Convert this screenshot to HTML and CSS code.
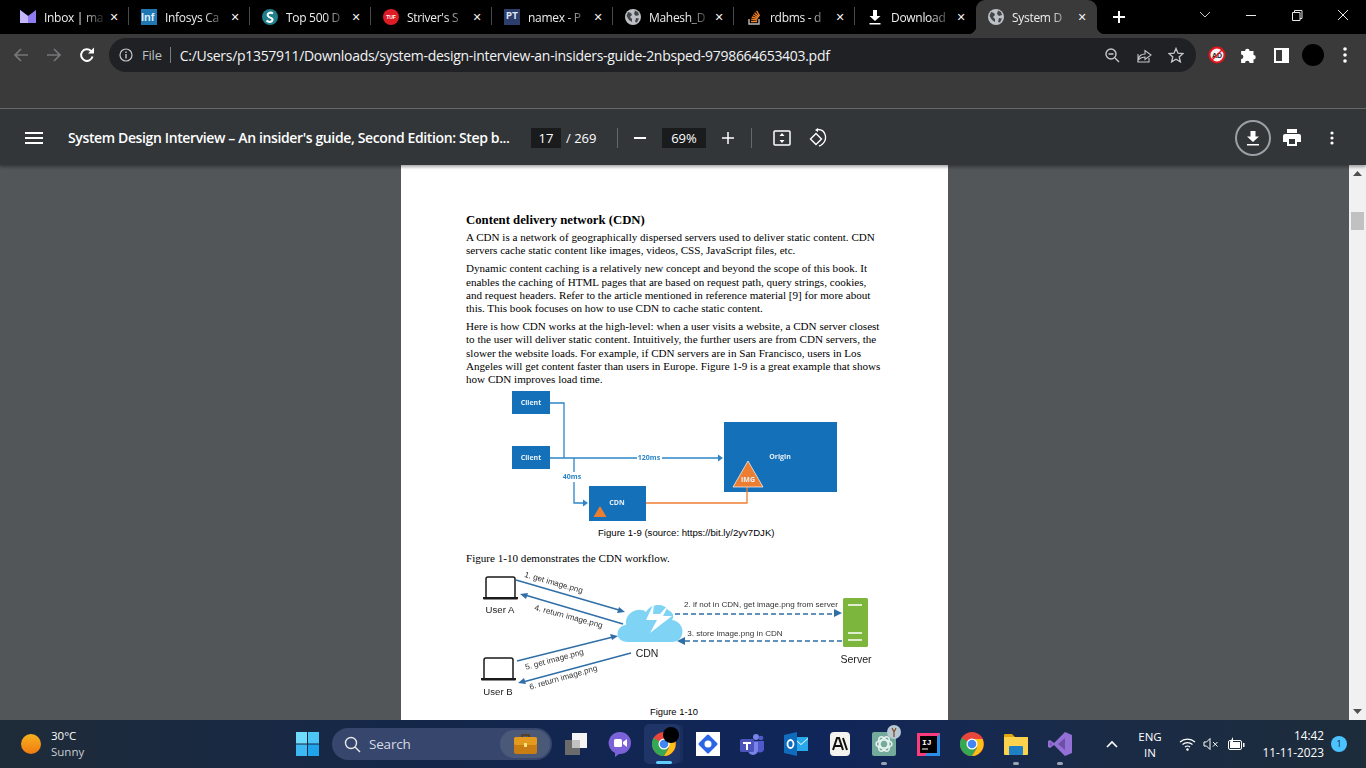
FILE: index.html
```html
<!DOCTYPE html>
<html lang="en">
<head>
  <meta charset="UTF-8">
  <title>System Design Interview</title>
  <link rel="stylesheet" href="styles.css">
</head>
<body>

<!-- tab strip -->
<div class="tabstrip">
  <div class="tab">
    <svg class="fav" viewBox="0 0 16 16"><path d="M0 1l8 6 8-6v13H0z" fill="#8f7cf0"/><path d="M0 1l8 6v7H0z" fill="#c4b5fd"/></svg>
    <span class="tab-title">Inbox | ma</span><span class="tab-x">&#10005;</span>
  </div>
  <div class="tab">
    <span class="fav fav-inf">Inf</span>
    <span class="tab-title">Infosys Ca</span><span class="tab-x">&#10005;</span>
  </div>
  <div class="tab">
    <svg class="fav" viewBox="0 0 16 16"><circle cx="8" cy="8" r="8" fill="#1f7f8c"/><path d="M11 4.500C8 2.500 4.500 4.500 6 7s5 1.500 4.500 4-4 2.500-6 .5" fill="none" stroke="#fff" stroke-width="2"/></svg>
    <span class="tab-title">Top 500 D</span><span class="tab-x">&#10005;</span>
  </div>
  <div class="tab">
    <span class="fav fav-tuf">TUF</span>
    <span class="tab-title">Striver's S</span><span class="tab-x">&#10005;</span>
  </div>
  <div class="tab">
    <span class="fav fav-pt">PT</span>
    <span class="tab-title">namex - P</span><span class="tab-x">&#10005;</span>
  </div>
  <div class="tab">
    <svg class="fav" viewBox="0 0 16 16"><use href="#globe"/></svg>
    <span class="tab-title">Mahesh_D</span><span class="tab-x">&#10005;</span>
  </div>
  <div class="tab">
    <svg class="fav" viewBox="0 0 16 16"><path d="M3 10v5h10v-5" fill="none" stroke="#bcbbbb" stroke-width="1.400"/><path d="M5 12.500h6M5.200 10.200l6 .6M5.800 8l5.800 1.600M7 5.800l5.200 3M8.600 3.800l4.400 4.200M10.600 1.800l3 5" stroke="#f48024" stroke-width="1.300" fill="none"/></svg>
    <span class="tab-title">rdbms - d</span><span class="tab-x">&#10005;</span>
  </div>
  <div class="tab">
    <svg class="fav" viewBox="0 0 16 16"><path d="M6 1h4v6h3.500L8 12 2.500 7H6zM2.500 14h11v1.600h-11z" fill="#fff"/></svg>
    <span class="tab-title">Download</span><span class="tab-x">&#10005;</span>
  </div>
  <div class="tab tab-active">
    <svg class="fav" viewBox="0 0 16 16"><use href="#globe"/></svg>
    <span class="tab-title">System D</span><span class="tab-x">&#10005;</span>
  </div>
  <div class="newtab">
    <svg width="14" height="14" viewBox="0 0 14 14"><path d="M7 1v12M1 7h12" stroke="#fff" stroke-width="2"/></svg>
  </div>
  <div class="winbtns">
    <svg width="46" height="12" viewBox="0 0 46 12"><path d="M18 3l5 5 5-5" fill="none" stroke="#c8c8c8"/></svg>
    <svg width="46" height="12" viewBox="0 0 46 12"><path d="M18 6.500h10" stroke="#e8e8e8"/></svg>
    <svg width="46" height="12" viewBox="0 0 46 12"><path d="M18.500 3.500h7.500v8h-7.500zM20.500 3.500v-2h7.500v8h-2" fill="none" stroke="#e8e8e8"/></svg>
    <svg width="46" height="12" viewBox="0 0 46 12"><path d="M18 1l10 10M28 1L18 11" stroke="#e8e8e8"/></svg>
  </div>
</div>

<!-- browser toolbar -->
<div class="toolbar">
  <svg class="nav-ico" viewBox="0 0 16 16"><path d="M15 8H2M8 2L2 8l6 6" fill="none" stroke="#75777a" stroke-width="1.700"/></svg>
  <svg class="nav-ico" viewBox="0 0 16 16"><path d="M1 8h13M8 2l6 6-6 6" fill="none" stroke="#75777a" stroke-width="1.700"/></svg>
  <svg class="nav-ico" viewBox="0 0 16 16"><path d="M13.500 9.500A5.800 5.800 0 1 1 12 4" fill="none" stroke="#fff" stroke-width="2"/><path d="M9 6.500h6v-6z" fill="#fff"/></svg>
  <div class="omnibox">
    <svg class="info" viewBox="0 0 14 14"><circle cx="7" cy="7" r="6" fill="none" stroke="#c4c7c9" stroke-width="1.200"/><path d="M7 6v4.500M7 3.500v1.500" stroke="#c4c7c9" stroke-width="1.400"/></svg>
    <span class="file">File</span>
    <span class="omni-sep"></span>
    <span class="url">C:/Users/p1357911/Downloads/system-design-interview-an-insiders-guide-2nbsped-9798664653403.pdf</span>
    <svg class="omni-ico" viewBox="0 0 16 16"><circle cx="7" cy="7" r="5" fill="none" stroke="#c4c7c9" stroke-width="1.400"/><path d="M4.500 7h5M11 11l4 4" stroke="#c4c7c9" stroke-width="1.400"/></svg>
    <svg class="omni-ico" viewBox="0 0 16 16"><path d="M2 7v8h11v-4M2 13c1-5 4-6 7-6V3.500L15 8l-6 4.500V10c-3 0-5 1-7 3z" fill="none" stroke="#c4c7c9" stroke-width="1.100"/></svg>
    <svg class="omni-ico" viewBox="0 0 16 16"><path d="M8 1.500l2 4.700 5 .4-3.800 3.300 1.200 5L8 12.300 3.600 14.900l1.200-5L1 6.600l5-.4z" fill="none" stroke="#c4c7c9" stroke-width="1.300"/></svg>
  </div>
  <div class="ext ext-first">
    <svg width="18" height="18" viewBox="0 0 18 18"><circle cx="9" cy="9" r="7.500" fill="#f5f5f5" stroke="#e8141c" stroke-width="2"/><text x="9" y="12" class="ad-text">AD</text><path d="M3.500 14.500l11-11" stroke="#e8141c" stroke-width="1.500"/></svg>
  </div>
  <div class="ext">
    <svg width="18" height="18" viewBox="0 0 16 16"><path d="M1 4.500h3.500a2 2 0 0 1 4 0H12V8a2 2 0 0 1 0 4v3H8.500a2 2 0 0 0-4 0H1v-3.500a2 2 0 0 0 0-4z" fill="#fff"/></svg>
  </div>
  <div class="ext">
    <svg width="15" height="15" viewBox="0 0 15 15"><path d="M0 0h15v15H0zM2 2v11h6V2z" fill="#fff" fill-rule="evenodd"/></svg>
  </div>
  <div class="ext"><span class="avatar"></span></div>
  <div class="ext">
    <svg width="4" height="16" viewBox="0 0 4 16"><circle cx="2" cy="2" r="1.800" fill="#fff"/><circle cx="2" cy="8" r="1.800" fill="#fff"/><circle cx="2" cy="14" r="1.800" fill="#fff"/></svg>
  </div>
</div>

<div class="band"></div>

<!-- pdf viewer toolbar -->
<div class="pdfbar">
  <svg class="menu" width="18" height="14" viewBox="0 0 18 14"><path d="M0 2h18M0 7h18M0 12h18" stroke="#fff" stroke-width="2"/></svg>
  <span class="doc-title">System Design Interview – An insider's guide, Second Edition: Step b...</span>
  <span class="num-box page-box">17</span>
  <span class="page-count">/ 269</span>
  <span class="bar-sep"></span>
  <svg class="zoom-btn" width="12" height="12" viewBox="0 0 12 12"><path d="M0 6h12" stroke="#fff" stroke-width="2"/></svg>
  <span class="num-box zoom-box">69%</span>
  <svg class="zoom-btn" width="12" height="12" viewBox="0 0 12 12"><path d="M0 6h12M6 0v12" stroke="#fff" stroke-width="1.500"/></svg>
  <span class="bar-sep bar-sep2"></span>
  <svg class="fit" width="18" height="18" viewBox="0 0 18 18"><rect x="1" y="2" width="16" height="14" rx="1" fill="none" stroke="#fff" stroke-width="1.500"/><path d="M9 4l-2.500 3h5zM9 14l-2.500-3h5z" fill="#fff"/></svg>
  <svg class="rotate" width="18" height="20" viewBox="0 0 18 20"><path d="M1.500 11L7 5.500l5.500 5.500L7 16.500z" fill="none" stroke="#fff" stroke-width="1.400"/><path d="M9 1.500c8 0 10 10 4 15-1 .8-2 1.300-3 1.500" fill="none" stroke="#fff" stroke-width="1.300"/><path d="M9 0v4l-3-2z" fill="#fff"/></svg>
  <span class="bar-right">
    <span class="dl-ring"><svg width="14" height="16" viewBox="0 0 14 16"><path d="M4.500 1h5v5.500H13L7 12 1 6.500h3.500zM1 14h12v1.600H1z" fill="#fff"/></svg></span>
    <svg class="print" width="18" height="17" viewBox="0 0 18 17"><path d="M4 0h10v4H4zM2 5h14a2 2 0 0 1 2 2v6h-4v4H4v-4H0V7a2 2 0 0 1 2-2zM6 10v5h6v-5z" fill="#fff" fill-rule="evenodd"/></svg>
    <svg class="dots" width="4" height="14" viewBox="0 0 4 14"><circle cx="2" cy="2" r="1.600" fill="#fff"/><circle cx="2" cy="7" r="1.600" fill="#fff"/><circle cx="2" cy="12" r="1.600" fill="#fff"/></svg>
  </span>
</div>

<!-- pdf area -->
<div class="viewer">
  <div class="stage">
    <div class="page">
      <h3>Content delivery network (CDN)</h3>
      <p>A CDN is a network of geographically dispersed servers used to deliver static content. CDN<br>servers cache static content like images, videos, CSS, JavaScript files, etc.</p>
      <p>Dynamic content caching is a relatively new concept and beyond the scope of this book. It<br>enables the caching of HTML pages that are based on request path, query strings, cookies,<br>and request headers. Refer to the article mentioned in reference material [9] for more about<br>this. This book focuses on how to use CDN to cache static content.</p>
      <p>Here is how CDN works at the high-level: when a user visits a website, a CDN server closest<br>to the user will deliver static content. Intuitively, the further users are from CDN servers, the<br>slower the website loads. For example, if CDN servers are in San Francisco, users in Los<br>Angeles will get content faster than users in Europe. Figure 1-9 is a great example that shows<br>how CDN improves load time.</p>

      <svg class="fig fig-one" width="547" height="136" viewBox="401 388 547 136">
        <rect x="512" y="391" width="38" height="23" fill="#1470b8"/>
        <rect x="512" y="446" width="38" height="23" fill="#1470b8"/>
        <rect x="724" y="422" width="113" height="70" fill="#1470b8"/>
        <rect x="589" y="486" width="57" height="35" fill="#1470b8"/>
        <path d="M550 403h14v55M550 458h87M662 458h56M574 458v14M574 482v21h9" fill="none" stroke="#2d85c8" stroke-width="1.300"/>
        <path d="M723 458l-5-3.500v7zM588 503l-5-3.500v7z" fill="#2d85c8"/>
        <path d="M646 503h101v-20" fill="none" stroke="#ed7d31" stroke-width="1.300"/>
        <path d="M748 461l15 26h-30z" fill="#ed7d31" stroke="#fff" stroke-width=".7"/>
        <path d="M600 506l6.500 11h-13z" fill="#ed7d31"/>
        <text x="531" y="405" class="box-label">Client</text>
        <text x="531" y="460" class="box-label">Client</text>
        <text x="780" y="459" class="box-label">Origin</text>
        <text x="617" y="505" class="box-label">CDN</text>
        <text x="748" y="482" class="box-label">IMG</text>
        <text x="649" y="460" class="ms-label">120ms</text>
        <text x="572" y="479" class="ms-label">40ms</text>
      </svg>
      <div class="caption cap-one">Figure 1-9 (source: https://bit.ly/2yv7DJK)</div>
      <p class="lead-fig">Figure 1-10 demonstrates the CDN workflow.</p>

      <svg class="fig fig-two" width="547" height="134" viewBox="401 570 547 134">
        <g fill="none" stroke="#1a1a1a" stroke-width="1.500">
          <path d="M486 597v-18q0-2 2-2h25q2 0 2 2v18"/>
          <path d="M484 678v-18q0-2 2-2h25q2 0 2 2v18"/>
        </g>
        <path d="M483 597h35v1.500q0 1-1 1h-33q-1 0-1-1zM481 678h35v1.500q0 1-1 1h-33q-1 0-1-1z" fill="#1a1a1a"/>
        <g stroke="#2f6fa7" stroke-width="1.500" fill="none">
          <path d="M516 580l103 30M623 624l-98-29M517 661l96-24M631 653l-108 29"/>
          <path d="M675 614h161M842 641H682" stroke-dasharray="5 3"/>
        </g>
        <g fill="#2f6fa7">
          <path d="M625 612l-8 1 2-6zM520 594l8-1-2 6zM618 636l-6 4-2-6zM518 683l6-5 2 6zM842 613l-8-4v8zM677 641l8-4v8z"/>
        </g>
        <path d="M628 642C614 642 615 626 626 625 624 612 640 606 646 612 650 604 664 602 668 610 674 612 674 618 672 620 686 622 686 642 672 642z" fill="#7fd3f4"/>
        <path d="M654 603l-8 17h11l-7 13 22-17h-9l6-12-9 10h-7z" fill="#fff"/>
        <rect x="843" y="598" width="25" height="49" rx="1.500" fill="#7db63c"/>
        <path d="M848 605h14M848 633h14M848 640h14" stroke="#fff" stroke-width="1.300"/>
        <text x="500" y="613" class="sm-label">User A</text>
        <text x="498" y="695" class="sm-label">User B</text>
        <text x="647" y="657" class="cdn-label">CDN</text>
        <text x="856" y="663" class="sm-label srv">Server</text>
        <text x="761" y="607" class="flow-label">2. if not in CDN, get image.png from server</text>
        <text x="735" y="636" class="flow-label">3. store image.png in CDN</text>
        <text transform="translate(553 585) rotate(16)" class="flow-label">1. get image.png</text>
        <text transform="translate(568 619) rotate(15)" class="flow-label">4. return image.png</text>
        <text transform="translate(555 662) rotate(-15)" class="flow-label">5. get image.png</text>
        <text transform="translate(564 680) rotate(-16)" class="flow-label">6. return image.png</text>
      </svg>
      <div class="caption cap-two">Figure 1-10</div>
    </div>
  </div>
  <div class="scrollbar">
    <svg class="sb-arrow" width="9" height="5" viewBox="0 0 9 5"><path d="M4.500 0L9 5H0z" fill="#505050"/></svg>
    <div class="sb-thumb"></div>
    <svg class="sb-arrow sb-down" width="9" height="5" viewBox="0 0 9 5"><path d="M4.500 5L9 0H0z" fill="#505050"/></svg>
  </div>
</div>

<!-- windows taskbar -->
<div class="taskbar">
  <div class="weather">
    <span class="sun"></span>
    <span class="weather-text"><span>30°C</span><span class="dim">Sunny</span></span>
  </div>
  <svg class="start" width="23" height="24" viewBox="0 0 23 24"><rect width="11" height="11.500" fill="#6fdcfb"/><rect x="12" width="11" height="11.500" fill="#4cc5f5"/><rect y="12.500" width="11" height="11.500" fill="#3cb8f2"/><rect x="12" y="12.500" width="11" height="11.500" fill="#1fa4ec"/></svg>
  <div class="searchbox">
    <svg width="17" height="17" viewBox="0 0 17 17"><circle cx="7" cy="7" r="5.500" fill="none" stroke="#e8e8e8" stroke-width="1.400"/><path d="M11 11l5 5" stroke="#e8e8e8" stroke-width="1.400"/></svg>
    <span class="search-text">Search</span>
    <span class="search-pill">
      <svg width="23" height="20" viewBox="0 0 23 20"><path d="M8 3V1h7v2" fill="none" stroke="#5a3a10" stroke-width="1.500"/><rect y="3" width="23" height="17" rx="2" fill="#c77d11"/><rect y="3" width="23" height="8" rx="2" fill="#e49a1f"/><rect x="10" y="9" width="3" height="4" fill="#ffe27a"/></svg>
    </span>
  </div>
  <div class="apps">
    <span class="app">
      <svg width="24" height="24" viewBox="0 0 24 24"><rect x="1" y="8" width="15" height="15" fill="#6b6b6b"/><rect x="8" y="1" width="15" height="15" fill="#f4f4f4"/><rect x="8" y="8" width="8" height="8" fill="#c2c2c2"/></svg>
    </span>
    <span class="app">
      <svg width="24" height="26" viewBox="0 0 24 26"><path d="M12 1a11 11 0 0 1 0 22h-1l-4 3v-4A11 11 0 0 1 12 1z" fill="#7b62d9"/><rect x="6" y="8" width="8" height="8" rx="1.500" fill="#fff"/><path d="M15 11l4-3v8l-4-3z" fill="#fff"/></svg>
    </span>
    <span class="app app-active">
      <svg width="24" height="24" viewBox="0 0 24 24"><use href="#chrome"/></svg>
      <span class="blob"></span>
      <span class="run-bar"></span>
    </span>
    <span class="app">
      <svg width="24" height="24" viewBox="0 0 24 24"><rect width="24" height="24" fill="#fff"/><path d="M12 4l8 8-8 8-8-8z" fill="#2b66e8" stroke="#2b66e8" stroke-width="3" stroke-linejoin="round"/><circle cx="12" cy="12" r="3.500" fill="#fff"/></svg>
    </span>
    <span class="app">
      <svg width="24" height="24" viewBox="0 0 24 24"><circle cx="16" cy="5" r="3" fill="#7b83eb"/><circle cx="21" cy="6" r="2.300" fill="#5059c9"/><path d="M14 9h10v7a4 4 0 0 1-8 1z" fill="#5059c9"/><path d="M8 10h10v8a5 5 0 0 1-10 0z" fill="#7b83eb"/><rect y="7" width="14" height="13" rx="1.500" fill="#4b53bc"/><path d="M3 10h8v2H8v6H6v-6H3z" fill="#fff"/></svg>
    </span>
    <span class="app">
      <svg width="24" height="24" viewBox="0 0 24 24"><rect x="10" y="5" width="14" height="14" fill="#28a8ea"/><path d="M10 6l7 6 7-6v1l-7 6-7-6z" fill="#fff"/><path d="M0 3l13-3v24L0 21z" fill="#0f6cbd"/><ellipse cx="6.500" cy="12" rx="3" ry="4" fill="none" stroke="#fff" stroke-width="1.800"/></svg>
    </span>
    <span class="app">
      <svg width="20" height="24" viewBox="0 0 20 24"><rect width="20" height="24" rx="4" fill="#f4f3ee"/><path d="M3 18l4-12h2l4 12M5 14h6M13 6l4 12" fill="none" stroke="#111" stroke-width="2"/></svg>
    </span>
    <span class="app">
      <svg width="24" height="24" viewBox="0 0 24 24"><rect width="24" height="24" rx="2" fill="#74aa9c"/><g fill="none" stroke="#e8f3ef" stroke-width="1.500"><ellipse cx="12" cy="12" rx="8" ry="4"/><ellipse cx="12" cy="12" rx="8" ry="4" transform="rotate(60 12 12)"/><ellipse cx="12" cy="12" rx="8" ry="4" transform="rotate(120 12 12)"/></g></svg>
      <span class="app-badge"><svg width="14" height="14" viewBox="0 0 14 14"><circle cx="7" cy="7" r="7" fill="#b8c7d4"/><path d="M5 3l2 4 2-4M7 7v5" stroke="#7a4a20" stroke-width="1.200" fill="none"/></svg></span>
      <span class="run-dot"></span>
    </span>
    <span class="app">
      <svg width="23" height="23" viewBox="0 0 23 23"><rect width="23" height="23" fill="#fc3c7c"/><path d="M23 0v23H8z" fill="#2a8fe8"/><rect x="3" y="3" width="17" height="17" fill="#000"/><text x="5" y="12" class="ij">IJ</text><path d="M5 16h6" stroke="#fff"/></svg>
    </span>
    <span class="app">
      <svg width="24" height="24" viewBox="0 0 24 24"><use href="#chrome"/></svg>
    </span>
    <span class="app">
      <svg width="24" height="24" viewBox="0 0 24 24"><path d="M0 3a1 1 0 0 1 1-1h7l3 3h13v2H0z" fill="#e2a60c"/><rect y="5" width="24" height="18" rx="1" fill="#fcd34d"/><rect x="5" y="14" width="14" height="9" rx="1" fill="#1f7fc4"/></svg>
      <span class="run-dot"></span>
    </span>
    <span class="app">
      <svg width="24" height="24" viewBox="0 0 24 24"><path d="M17 0l7 3v18l-7 3L6 13l-4 3-2-1V9l2-1 4 3z" fill="#9270d6"/><path d="M17 6v12l-7-6zM2 10v4l2-2z" fill="#3d2a6e" fill-opacity=".45"/></svg>
      <span class="run-dot"></span>
    </span>
  </div>
  <div class="tray">
    <svg class="tray-chev" width="12" height="8" viewBox="0 0 12 8"><path d="M1 7l5-5 5 5" fill="none" stroke="#fff" stroke-width="1.600"/></svg>
    <span class="lang"><span>ENG</span><span>IN</span></span>
    <svg class="tray-wifi" width="17" height="14" viewBox="0 0 17 14"><path d="M1 5a11 11 0 0 1 15 0M3.500 7.500a7.500 7.500 0 0 1 10 0M6 10a4 4 0 0 1 5 0" fill="none" stroke="#fff" stroke-width="1.200"/><circle cx="8.500" cy="12.500" r="1.200" fill="#fff"/></svg>
    <svg class="tray-vol" width="16" height="14" viewBox="0 0 16 14"><path d="M1 5h2.500L7 1.500v11L3.500 9H1z" fill="none" stroke="#fff"/><path d="M10 5l4.500 4.500M14.500 5L10 9.500" stroke="#fff"/></svg>
    <svg class="tray-bat" width="17" height="14" viewBox="0 0 17 14"><rect x=".5" y="3.500" width="13" height="9" rx="1.500" fill="none" stroke="#fff"/><rect x="2" y="5" width="10" height="6" fill="#fff"/><path d="M15 6h1.500v4H15zM5 0L2 5h3" fill="#fff"/></svg>
    <span class="clock"><span>14:42</span><span>11-11-2023</span></span>
    <span class="notif">1</span>
  </div>
</div>

<svg class="defs" width="0" height="0">
  <defs>
    <g id="globe">
      <circle cx="8" cy="8" r="8" fill="#bdc1c6"/>
      <path d="M3 3l3 1 1 2-2 2 2 2v3L4 11 1.500 7zM10 1.500l3 1.500 1 3-3 1-2-2zM11 9l3 .5-2 4-2-.5z" fill="#44474a"/>
    </g>
    <g id="chrome">
      <circle cx="12" cy="12" r="12" fill="#e8453c"/>
      <path d="M12 12L1.600 6A12 12 0 0 0 12 24l5-9z" fill="#34a853"/>
      <path d="M12 7h10.500A12 12 0 0 1 12 24l5-8z" fill="#fbc116"/>
      <circle cx="12" cy="12" r="5.500" fill="#fff"/>
      <circle cx="12" cy="12" r="4.300" fill="#4285f4"/>
    </g>
  </defs>
</svg>

</body>
</html>
```

FILE: styles.css
```css
* {
  box-sizing: border-box;
}
html, body {
  height: 100%;
}
body {
  margin: 0;
  width: 1366px;
  height: 768px;
  overflow: hidden;
  display: flex;
  flex-direction: column;
  font-family: "Open Sans", "Noto Sans", sans-serif;
  color: #fff;
  background: #000;
}
svg {
  display: block;
  flex: none;
}
.defs {
  position: absolute;
}

/* tabs */
.tabstrip {
  height: 34px;
  flex: none;
  display: flex;
  background: #000;
  padding-left: 8px;
}
.tab {
  width: 121px;
  height: 34px;
  display: flex;
  align-items: center;
  padding: 0 9px 0 12px;
  font-size: 12px;
  position: relative;
}
.tab::after {
  content: "";
  position: absolute;
  right: 0;
  top: 7px;
  height: 18px;
  width: 1px;
  background: #4a4a4a;
}
.tab:nth-child(8)::after {
  display: none;
}
.tab-active {
  background: #3a3a3a;
  border-radius: 9px 9px 0 0;
}
/* the flared feet of the active tab */
.tab-active::before,
.tab-active::after {
  content: "";
  position: absolute;
  top: auto;
  bottom: 0;
  width: 8px;
  height: 8px;
  background: radial-gradient(circle at 0 0, #000 8px, #3a3a3a 8.5px);
}
.tab-active::before {
  left: -8px;
  right: auto;
}
.tab-active::after {
  left: auto;
  right: -8px;
  background: radial-gradient(circle at 100% 0, #000 8px, #3a3a3a 8.5px);
}
.fav {
  width: 16px;
  height: 16px;
  flex: none;
  margin-right: 8px;
}
.fav-inf {
  background: #1f78b4;
  font: 700 11px "Liberation Sans", sans-serif;
  line-height: 16px;
  overflow: hidden;
  color: #dbeeff;
}
.fav-tuf {
  background: #dd1c26;
  border-radius: 50%;
  font: 700 5px "Liberation Sans", sans-serif;
  line-height: 16px;
  text-align: center;
}
.fav-pt {
  background: #2c3e6b;
  font: 700 10px "Liberation Mono", monospace;
  line-height: 16px;
  text-align: center;
  color: #dfe6f5;
}
.tab-title {
  flex: 1;
  min-width: 0;
  white-space: nowrap;
  letter-spacing: -.3px;
  -webkit-mask-image: linear-gradient(to right, #000 60%, rgba(0,0,0,.15) 92%);
  mask-image: linear-gradient(to right, #000 60%, rgba(0,0,0,.15) 92%);
  color: #eee;
}
.tab-x {
  flex: none;
  width: 12px;
  font-size: 11px;
  font-family: "DejaVu Sans", sans-serif;
  font-weight: 700;
  text-align: center;
  color: #f0f0f0;
}
.newtab {
  width: 44px;
  display: flex;
  justify-content: center;
  align-items: center;
}
.winbtns {
  margin-left: auto;
  display: flex;
  align-items: flex-start;
  padding-top: 9px;
}

/* toolbar */
.toolbar {
  height: 38px;
  flex: none;
  display: flex;
  align-items: flex-end;
  background: #3a3a3a;
  padding-left: 13px;
}
.nav-ico {
  width: 16px;
  height: 16px;
  margin: 0 17px 9px 0;
}
.nav-ico:nth-child(3) {
  margin-right: 14px;
}
.omnibox {
  width: 1087px;
  height: 34px;
  background: #202124;
  border-radius: 17px;
  display: flex;
  align-items: center;
  padding: 0 12px 0 10px;
  font-size: 13px;
}
.info {
  width: 14px;
  height: 14px;
}
.file {
  margin-left: 9px;
  color: #bdc1c6;
  letter-spacing: -.2px;
}
.omni-sep {
  width: 1px;
  height: 16px;
  background: #7a7c7f;
  margin: 0 9px 0 8px;
}
.url {
  flex: 1;
  white-space: nowrap;
  color: #f1f3f4;
  font-size: 14px;
  letter-spacing: -.3px;
}
.omni-ico {
  width: 16px;
  height: 16px;
  margin-left: 16px;
}
.ext {
  width: 32px;
  height: 34px;
  display: flex;
  align-items: center;
  justify-content: center;
}
.ext-first {
  margin-left: 5px;
}
.ad-text {
  font: 700 7px "Liberation Sans", sans-serif;
  text-anchor: middle;
  fill: #222;
}
.avatar {
  width: 22px;
  height: 22px;
  border-radius: 50%;
  background: #000;
}
.band {
  height: 37px;
  flex: none;
  background: #3a3a3a;
  border-bottom: 1px solid #6a6a6a;
}

/* pdf toolbar */
.pdfbar {
  height: 56px;
  flex: none;
  display: flex;
  align-items: center;
  background: #323639;
  padding: 1px 0 0 25px;
  font-size: 13px;
  box-shadow: 0 2px 3px rgba(0,0,0,.35);
  position: relative;
  z-index: 1;
}
.doc-title {
  margin-left: 25px;
  width: 463px;
  font-weight: 600;
  font-size: 14px;
  white-space: nowrap;
  letter-spacing: -.37px;
}
.num-box {
  background: #191b1c;
  height: 20px;
  line-height: 20px;
  text-align: center;
}
.page-box {
  width: 30px;
}
.page-count {
  margin-left: 5px;
  width: 51px;
}
.bar-sep {
  width: 1px;
  height: 20px;
  background: #64686b;
}
.zoom-btn {
  margin: 0 14px 0 16px;
}
.zoom-box {
  width: 44px;
  margin-left: 2px;
}
.zoom-box + .zoom-btn {
  margin: 0 0 0 16px;
}
.bar-sep2 {
  margin-left: 17px;
}
.fit {
  margin-left: 21px;
}
.rotate {
  margin-left: 18px;
}
.bar-right {
  margin-left: auto;
  display: flex;
  align-items: center;
  padding-right: 32px;
}
.dl-ring {
  width: 36px;
  height: 36px;
  border: 2px solid #9aa0a6;
  border-radius: 50%;
  display: flex;
  align-items: center;
  justify-content: center;
}
.print {
  margin-left: 12px;
}
.dots {
  margin-left: 29px;
}

/* pdf area */
.viewer {
  height: 555px;
  flex: none;
  display: flex;
  background: #525659;
  overflow: hidden;
}
.stage {
  flex: 1;
  display: flex;
  padding-left: 401px;
}
.page {
  width: 547px;
  height: 555px;
  background: #fff;
  color: #000;
  padding: 48px 0 0 65px;
  font-family: "Liberation Serif", serif;
  font-size: 11.1px;
  line-height: 13.3px;
  overflow: hidden;
  flex: none;
}
.page h3 {
  margin: 0 0 4px;
  font-size: 12.75px;
  line-height: 14px;
}
.page p {
  margin: 0 0 4.7px;
  white-space: nowrap;
}
.fig {
  margin-left: -65px;
  filter: blur(.3px);
}
.fig-one {
  margin-top: -3px;
}
.box-label {
  font: 700 7px "Open Sans", sans-serif;
  fill: #e6f1fa;
  text-anchor: middle;
}
.ms-label {
  font: 700 7px "Open Sans", sans-serif;
  fill: #2d85c8;
  text-anchor: middle;
}
.caption {
  font-family: "Liberation Sans", sans-serif;
  font-size: 9.6px;
  line-height: 12px;
}
.cap-one {
  margin: 3px 0 0 132px;
}
.page p.lead-fig {
  margin-top: 13px;
  margin-bottom: 0;
}
.fig-two {
  margin-top: 4px;
}
.sm-label {
  font: 9.6px "Liberation Sans", sans-serif;
  fill: #222;
  text-anchor: middle;
}
.srv {
  font-size: 10.6px;
}
.cdn-label {
  font: 10.5px "Liberation Sans", sans-serif;
  fill: #222;
  text-anchor: middle;
}
.flow-label {
  font: 8.1px "Liberation Sans", sans-serif;
  fill: #333;
  text-anchor: middle;
}
.cap-two {
  margin: 2px 0 0 184px;
  font-size: 9.4px;
}
.scrollbar {
  width: 17px;
  background: #f1f1f1;
  display: flex;
  flex-direction: column;
  align-items: center;
  padding-top: 6px;
}
.sb-thumb {
  width: 13px;
  height: 18px;
  background: #c1c1c1;
  margin-top: 36px;
}
.sb-down {
  margin-top: auto;
  margin-bottom: 6px;
}

/* taskbar */
.taskbar {
  height: 48px;
  flex: none;
  display: flex;
  align-items: center;
  background: linear-gradient(to right, #1e2b38 0%, #12264f 40%, #10265a 60%, #1a2b47 80%, #1d2c3a 100%);
  font-size: 11.5px;
}
.weather {
  width: 296px;
  display: flex;
  align-items: center;
  padding-left: 21px;
  flex: none;
}
.sun {
  width: 20px;
  height: 20px;
  border-radius: 50%;
  background: linear-gradient(#f5b21e, #f07a12);
}
.weather-text {
  margin-left: 10px;
  display: flex;
  flex-direction: column;
  line-height: 16px;
}
.dim {
  color: #c9ced4;
}
.start {
  margin-right: 13px;
}
.searchbox {
  width: 220px;
  height: 32px;
  background: #36466c;
  border-radius: 16px;
  display: flex;
  align-items: center;
  padding: 0 2px 0 12px;
  flex: none;
}
.search-text {
  margin-left: 8px;
  font-size: 13.5px;
  color: #d8dce4;
  letter-spacing: -.2px;
}
.search-pill {
  margin-left: auto;
  width: 50px;
  height: 28px;
  border-radius: 14px;
  background: #4b5979;
  display: flex;
  align-items: center;
  justify-content: center;
}
.apps {
  display: flex;
  margin-left: 2px;
}
.app {
  width: 44px;
  height: 42px;
  display: flex;
  align-items: center;
  justify-content: center;
  position: relative;
}
.app svg {
  position: relative;
}
.app-active::before {
  content: "";
  position: absolute;
  left: 2px;
  top: 1px;
  bottom: 1px;
  width: 36px;
  background: #1f3567;
  border-radius: 5px;
  box-shadow: 4px 0 0 -1px #1a2e5c;
}
.blob {
  position: absolute;
  left: 21px;
  top: 4px;
  width: 16px;
  height: 16px;
  border-radius: 50%;
  background: #000;
}
.run-bar {
  position: absolute;
  bottom: 1px;
  left: 14px;
  width: 16px;
  height: 3px;
  border-radius: 2px;
  background: #60cdff;
}
.run-dot {
  position: absolute;
  bottom: 0;
  left: 19px;
  width: 6px;
  height: 3px;
  border-radius: 2px;
  background: #9aa3b2;
}
.app-badge {
  position: absolute;
  left: 25px;
  top: 2px;
}
.ij {
  font: 700 8px "Liberation Mono", monospace;
  fill: #fff;
}
.tray {
  flex: 1;
  display: flex;
  align-items: center;
  padding-left: 24px;
  min-width: 0;
}
.lang {
  margin-left: 13px;
  width: 38px;
  display: flex;
  flex-direction: column;
  align-items: center;
  line-height: 16px;
  padding-top: 2px;
}
.tray-wifi {
  margin-left: 10px;
}
.tray-vol {
  margin-left: 7px;
}
.tray-bat {
  margin-left: 9px;
}
.clock {
  width: 73px;
  margin-left: 6px;
  display: flex;
  flex-direction: column;
  align-items: flex-end;
  line-height: 17px;
  font-size: 11.8px;
  white-space: nowrap;
}
.notif {
  margin-left: 7px;
  width: 16px;
  height: 16px;
  border-radius: 50%;
  background: #4cc2ff;
  color: #0a2540;
  font-size: 9px;
  line-height: 16px;
  text-align: center;
}
```
